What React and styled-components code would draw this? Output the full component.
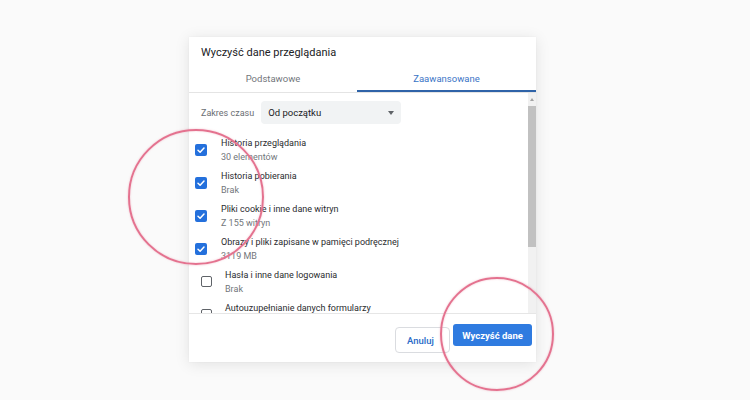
import React from 'react';
import styled, { createGlobalStyle } from 'styled-components';

const GlobalStyle = createGlobalStyle`
  html, body {
    margin: 0;
    padding: 0;
    background: #fafafa;
    font-family: Roboto, "Noto Sans", Arial, sans-serif;
  }
`;

const items = [
  { title: 'Historia przeglądania', sub: '30 elementów', checked: true },
  { title: 'Historia pobierania', sub: 'Brak', checked: true },
  { title: 'Pliki cookie i inne dane witryn', sub: 'Z 155 witryn', checked: true },
  { title: 'Obrazy i pliki zapisane w pamięci podręcznej', sub: '3119 MB', checked: true },
  { title: 'Hasła i inne dane logowania', sub: 'Brak', checked: false },
  { title: 'Autouzupełnianie danych formularzy', sub: '', checked: false },
];

function CheckIcon() {
  return (
    <svg width="10" height="10" viewBox="0 0 10 10">
      <path d="M2 5.2 L4.1 7.2 L8 3" fill="none" stroke="#fff" strokeWidth="1.5" strokeLinecap="round" strokeLinejoin="round" />
    </svg>
  );
}

function App() {
  return (
    <Page>
      <GlobalStyle />
      <Dialog>
        <Title>Wyczyść dane przeglądania</Title>
        <Tabs>
          <Tab $width="168px">Podstawowe</Tab>
          <Tab $active>Zaawansowane</Tab>
        </Tabs>
        <Body>
          <Content>
            <RangeRow>
              <RangeLabel>Zakres czasu</RangeLabel>
              <Select>
                Od początku
                <Caret />
              </Select>
            </RangeRow>
            <List>
              {items.map(item => (
                <Row key={item.title} $indent={item.checked ? 6 : 12}>
                  <Box $checked={item.checked}>{item.checked && <CheckIcon />}</Box>
                  <Texts $gap={item.checked ? 14 : 13}>
                    <ItemTitle>{item.title}</ItemTitle>
                    {item.sub && <ItemSub>{item.sub}</ItemSub>}
                  </Texts>
                </Row>
              ))}
            </List>
          </Content>
          <ScrollTrack>
            <ScrollArrow />
            <ScrollThumb />
          </ScrollTrack>
        </Body>
        <Footer>
          <CancelButton>Anuluj</CancelButton>
          <ClearButton>Wyczyść dane</ClearButton>
        </Footer>
      </Dialog>
      <Lens $x={196} $y={197} $r={68} />
      <Lens $x={497} $y={334} $r={57} />
    </Page>
  );
}

const Page = styled.div`
  position: relative;
  width: 750px;
  height: 400px;
  overflow: hidden;
  padding: 37px 0 0 189px;
  box-sizing: border-box;
`;

const Dialog = styled.div`
  width: 347px;
  height: 325px;
  background: #fff;
  box-shadow: 0 2px 14px rgba(0, 0, 0, 0.1), 0 0 2px rgba(0, 0, 0, 0.04);
  display: flex;
  flex-direction: column;
`;

const Title = styled.div`
  padding: 8px 12px 0;
  height: 16px;
  line-height: 16px;
  font-size: 11px;
  color: #202124;
`;

const Tabs = styled.div`
  display: flex;
  margin-top: 3px;
  height: 28px;
  border-bottom: 1px solid #e4e4e4;
`;

const Tab = styled.div`
  flex: ${p => (p.$width ? `0 0 ${p.$width}` : '1')};
  display: flex;
  align-items: center;
  justify-content: center;
  font-size: 9.5px;
  color: ${p => (p.$active ? '#3a74c6' : '#72767b')};
  box-shadow: ${p => (p.$active ? 'inset 0 -2px 0 #2f63a8' : 'none')};
  padding-top: 1px;
`;

const Body = styled.div`
  display: flex;
  height: 220px;
  border-bottom: 1px solid #e6e6e6;
`;

const Content = styled.div`
  flex: 1;
  overflow: hidden;
  padding-top: 8px;
`;

const RangeRow = styled.div`
  display: flex;
  align-items: center;
  padding-left: 12px;
  gap: 7px;
`;

const RangeLabel = styled.span`
  font-size: 9px;
  color: #6a6e73;
`;

const Select = styled.div`
  position: relative;
  width: 140px;
  height: 23px;
  border-radius: 4px;
  background: #f1f3f4;
  display: flex;
  align-items: center;
  padding-left: 7px;
  box-sizing: border-box;
  font-size: 9.5px;
  color: #202124;
`;

const Caret = styled.span`
  position: absolute;
  right: 7px;
  top: 10px;
  width: 0;
  height: 0;
  border-left: 3.5px solid transparent;
  border-right: 3.5px solid transparent;
  border-top: 4px solid #5f6368;
`;

const List = styled.div`
  margin-top: 12px;
  display: flex;
  flex-direction: column;
`;

const Row = styled.div`
  display: flex;
  align-items: flex-start;
  height: 33px;
  flex-shrink: 0;
  padding-left: ${p => p.$indent}px;
`;

const Box = styled.div`
  width: ${p => (p.$checked ? 12 : 11)}px;
  height: ${p => (p.$checked ? 12 : 11)}px;
  margin-top: 8px;
  box-sizing: border-box;
  border-radius: 2px;
  flex-shrink: 0;
  display: flex;
  align-items: center;
  justify-content: center;
  background: ${p => (p.$checked ? '#2470dc' : '#fff')};
  border: ${p => (p.$checked ? 'none' : '1.5px solid #5f6368')};
`;

const Texts = styled.div`
  display: flex;
  flex-direction: column;
  margin-left: ${p => p.$gap}px;
`;

const ItemTitle = styled.div`
  font-size: 9px;
  line-height: 14px;
  color: #2a2b2e;
  white-space: nowrap;
`;

const ItemSub = styled.div`
  font-size: 9px;
  line-height: 14px;
  color: #72767b;
  white-space: nowrap;
`;

const ScrollTrack = styled.div`
  width: 8px;
  background: #f1f1f1;
  display: flex;
  flex-direction: column;
  align-items: center;
`;

const ScrollArrow = styled.div`
  margin-top: 5px;
  width: 0;
  height: 0;
  border-left: 2.5px solid transparent;
  border-right: 2.5px solid transparent;
  border-bottom: 3px solid #a3a3a3;
`;

const ScrollThumb = styled.div`
  margin-top: 5px;
  width: 8px;
  height: 141px;
  background: #c1c1c1;
`;

const Footer = styled.div`
  flex: 1;
  display: flex;
  justify-content: flex-end;
  align-items: flex-start;
  padding: 10px 4px 0 0;
  gap: 3px;
`;

const CancelButton = styled.button`
  margin-top: 3px;
  width: 55px;
  height: 26px;
  border: 1px solid #dadce0;
  border-radius: 4px;
  background: #fff;
  color: #2a6bc8;
  font-family: Roboto, Arial, sans-serif;
  font-size: 9.5px;
  font-weight: 500;
  padding: 0 4px 0 0;
`;

const ClearButton = styled.button`
  width: 79px;
  height: 22px;
  border: none;
  border-radius: 3px;
  background: #2f7be0;
  color: #fff;
  font-family: Roboto, Arial, sans-serif;
  font-size: 9.5px;
  font-weight: 700;
  padding: 0;
`;

const Lens = styled.div`
  position: absolute;
  left: ${p => p.$x - p.$r}px;
  top: ${p => p.$y - p.$r}px;
  width: ${p => p.$r * 2}px;
  height: ${p => p.$r * 2}px;
  border-radius: 50%;
  box-sizing: border-box;
  border: 2.5px solid #e4728f;
  box-shadow: 0 0 2px rgba(228, 114, 143, 0.5), inset 0 0 2px rgba(228, 114, 143, 0.4);
  pointer-events: none;
`;

export default App;
